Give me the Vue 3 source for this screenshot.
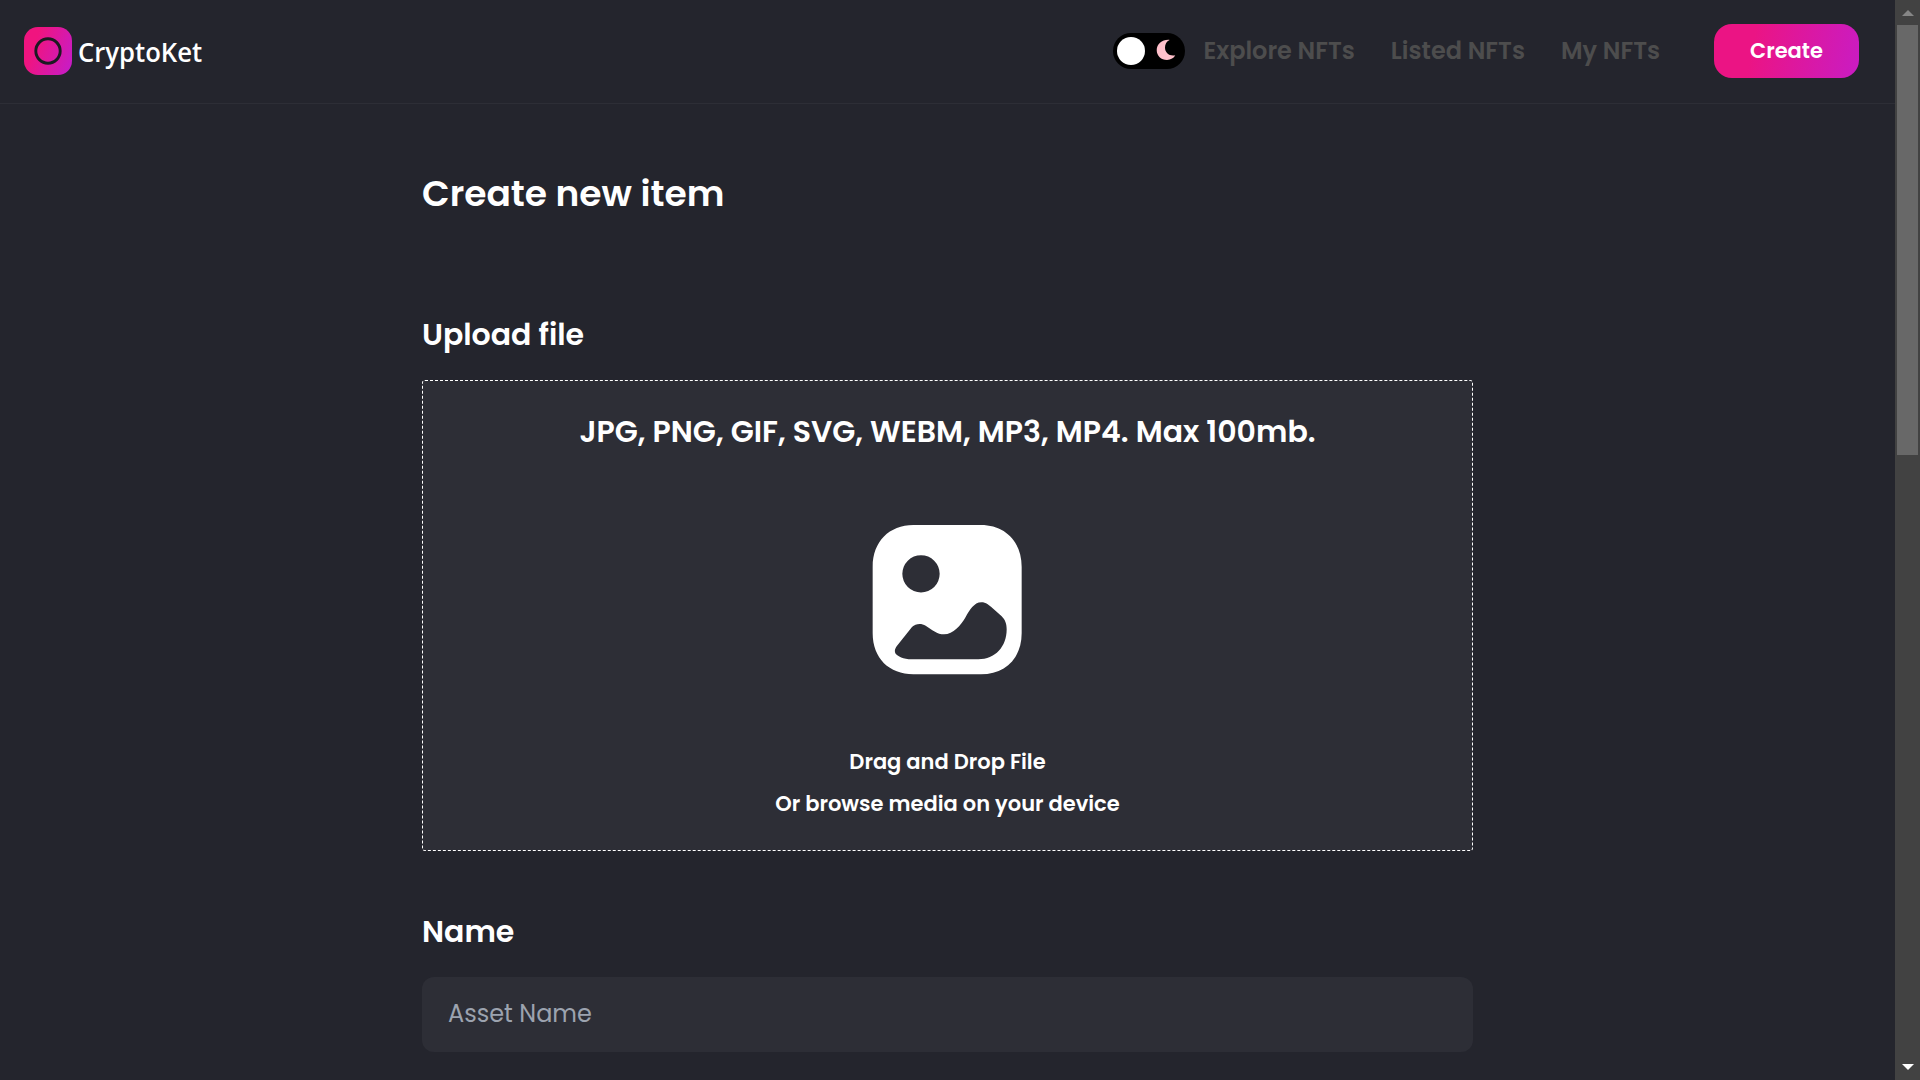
<script setup>
import { ref } from 'vue'

const links = [
  { label: 'Explore NFTs', cls: 'explore' },
  { label: 'Listed NFTs', cls: 'listed' },
  { label: 'My NFTs', cls: 'mine' }
]
const name = ref('')
</script>

<template>
  <div class="app">
    <div class="page">
      <nav class="navbar">
        <div class="brand">
          <svg class="logo" viewBox="0 0 48 48">
            <defs>
              <linearGradient id="brandFill" x1="0" y1="0.3" x2="1" y2="0.7">
                <stop offset="0.2" stop-color="#f0147f" />
                <stop offset="1" stop-color="#c91cc3" />
              </linearGradient>
            </defs>
            <rect width="48" height="48" rx="14" fill="url(#brandFill)" />
            <circle cx="24" cy="24" r="12.2" fill="none" stroke="#1b1a21" stroke-width="2.900" />
          </svg>
          <span class="brand-name">CryptoKet</span>
        </div>
        <div class="actions">
          <div class="toggle">
            <span class="ball"></span>
            <svg class="moon" viewBox="0 0 20 22">
              <path d="M13 .7C6 .4 .7 5 .7 11S5.200 21 11 21C14.800 21 18 19 19.200 16.300C13.500 17.500 9 13.800 9 8.500C9 5 10.500 2.300 13.600 .9Z" fill="#ffc0cb" />
            </svg>
          </div>
          <ul class="links">
            <li v-for="link in links" :key="link.label" :class="link.cls">{{ link.label }}</li>
          </ul>
          <button class="create">Create</button>
        </div>
      </nav>

      <main class="content">
        <h1>Create new item</h1>
        <p class="label upload">Upload file</p>
        <div class="dropzone">
          <p class="formats">JPG, PNG, GIF, SVG, WEBM, MP3, MP4. Max 100mb.</p>
          <svg class="picture" viewBox="96 75 450 450">
            <path
              fill="#fff"
              fill-rule="evenodd"
              d="M220 75H423C495 75 545 125 545 200V400C545 475 495 523 423 523H220C148 523 98 475 98 400V200C98 125 148 75 220 75Z
                 M243 165.500A56 56 0 1 0 243 277.500A56 56 0 1 0 243 165.500Z
                 M216 381C227 370 244 369 257 377C275 389 292 403 312 403C340 403 362 376 377 351C389 331 402 307 424 307C438 307 447 315 458 325L485 349C496 360 500 372 500 388C500 440 466 478 415 478H215C190 478 173 470 166 460C163 453 165 446 170 439Z"
            />
          </svg>
          <p class="hint">Drag and Drop File</p>
          <p class="hint">Or browse media on your device</p>
        </div>
        <p class="label name">Name</p>
        <input v-model="name" class="field" placeholder="Asset Name" />
      </main>
    </div>

    <div class="scrollbar">
      <svg class="arrow" viewBox="0 0 12 6"><path d="M6 0L12 6H0Z" fill="#868686" /></svg>
      <div class="thumb"></div>
      <svg class="arrow down" viewBox="0 0 12 6"><path d="M0 0H12L6 6Z" fill="#fff" /></svg>
    </div>
  </div>
</template>

<style>
body {
  margin: 0;
  background: #24252d;
}
</style>

<style scoped>
.app {
  display: flex;
  height: 1080px;
  overflow: hidden;
  background: #24252d;
  color: #fff;
  font-family: Poppins, Inter, sans-serif;
  font-weight: 600;
}
.page {
  flex: 1;
}
h1, p, ul {
  margin: 0;
  padding: 0;
}

.navbar {
  box-sizing: border-box;
  height: 104px;
  padding: 0 36px 1px 24px;
  border-bottom: 1px solid #2d2e36;
  display: flex;
  justify-content: space-between;
  align-items: center;
}
.brand {
  display: flex;
  align-items: center;
  gap: 6px;
}
.logo {
  width: 48px;
  height: 48px;
}
.brand-name {
  font: 600 27px/40px "Segoe UI", "Open Sans", sans-serif;
  padding-top: 1px;
  transform: scaleX(0.95);
  transform-origin: left center;
}
.actions {
  display: flex;
  align-items: center;
}
.toggle {
  box-sizing: border-box;
  width: 72px;
  height: 36px;
  padding: 0 9px 0 4px;
  border-radius: 18px;
  background: #000;
  display: flex;
  align-items: center;
  justify-content: space-between;
}
.ball {
  width: 28px;
  height: 28px;
  border-radius: 50%;
  background: #fff;
}
.moon {
  width: 20px;
  height: 22px;
  margin-bottom: 3px;
}
.links {
  display: flex;
  list-style: none;
  margin-left: 18.400px;
  font-size: 24px;
  line-height: 36px;
  white-space: nowrap;
  color: #4d4d4d;
}
.explore { width: 187.400px; }
.listed { width: 170.200px; }
.mine { width: 153px; }
.create {
  width: 145px;
  height: 54px;
  padding: 0 0 1px;
  border: 0;
  border-radius: 18px;
  background: linear-gradient(101.12deg, #eb1484 27.35%, #c91cc3 99.99%);
  color: #fff;
  font: inherit;
  font-size: 21px;
}

.content {
  width: 1051px;
  margin: 0 auto;
  padding-top: 70px;
}
h1 {
  font-size: 36px;
  font-weight: 600;
  line-height: 40px;
}
.label {
  font-size: 30px;
  line-height: 40px;
}
.upload { margin-top: 101px; }
.name { margin-top: 61px; }
.dropzone {
  box-sizing: border-box;
  height: 471px;
  margin-top: 25px;
  padding-top: 31px;
  border: 1px dashed #fff;
  border-radius: 3px;
  background: #2d2e36;
  display: flex;
  flex-direction: column;
  align-items: center;
}
.formats {
  font-size: 30px;
  line-height: 40px;
}
.picture {
  width: 150px;
  height: 150px;
  margin: 73px 1px 65.500px 0;
}
.hint {
  font-size: 21px;
  line-height: 42px;
}
.field {
  display: block;
  box-sizing: border-box;
  width: 100%;
  height: 75px;
  margin-top: 25px;
  padding: 0 26px 2px;
  border: 0;
  border-radius: 12px;
  outline: 0;
  background: #2d2e36;
  color: #fff;
  font: inherit;
  font-size: 24px;
  font-weight: 400;
}
.field::placeholder {
  color: #9ca3af;
}

.scrollbar {
  box-sizing: border-box;
  width: 25px;
  padding: 10px 2px;
  background: #424242;
  display: flex;
  flex-direction: column;
  align-items: center;
}
.arrow {
  width: 12px;
  height: 6px;
}
.thumb {
  width: 21px;
  height: 430px;
  margin-top: 9px;
  background: #686868;
}
.down {
  margin-top: auto;
}
</style>
